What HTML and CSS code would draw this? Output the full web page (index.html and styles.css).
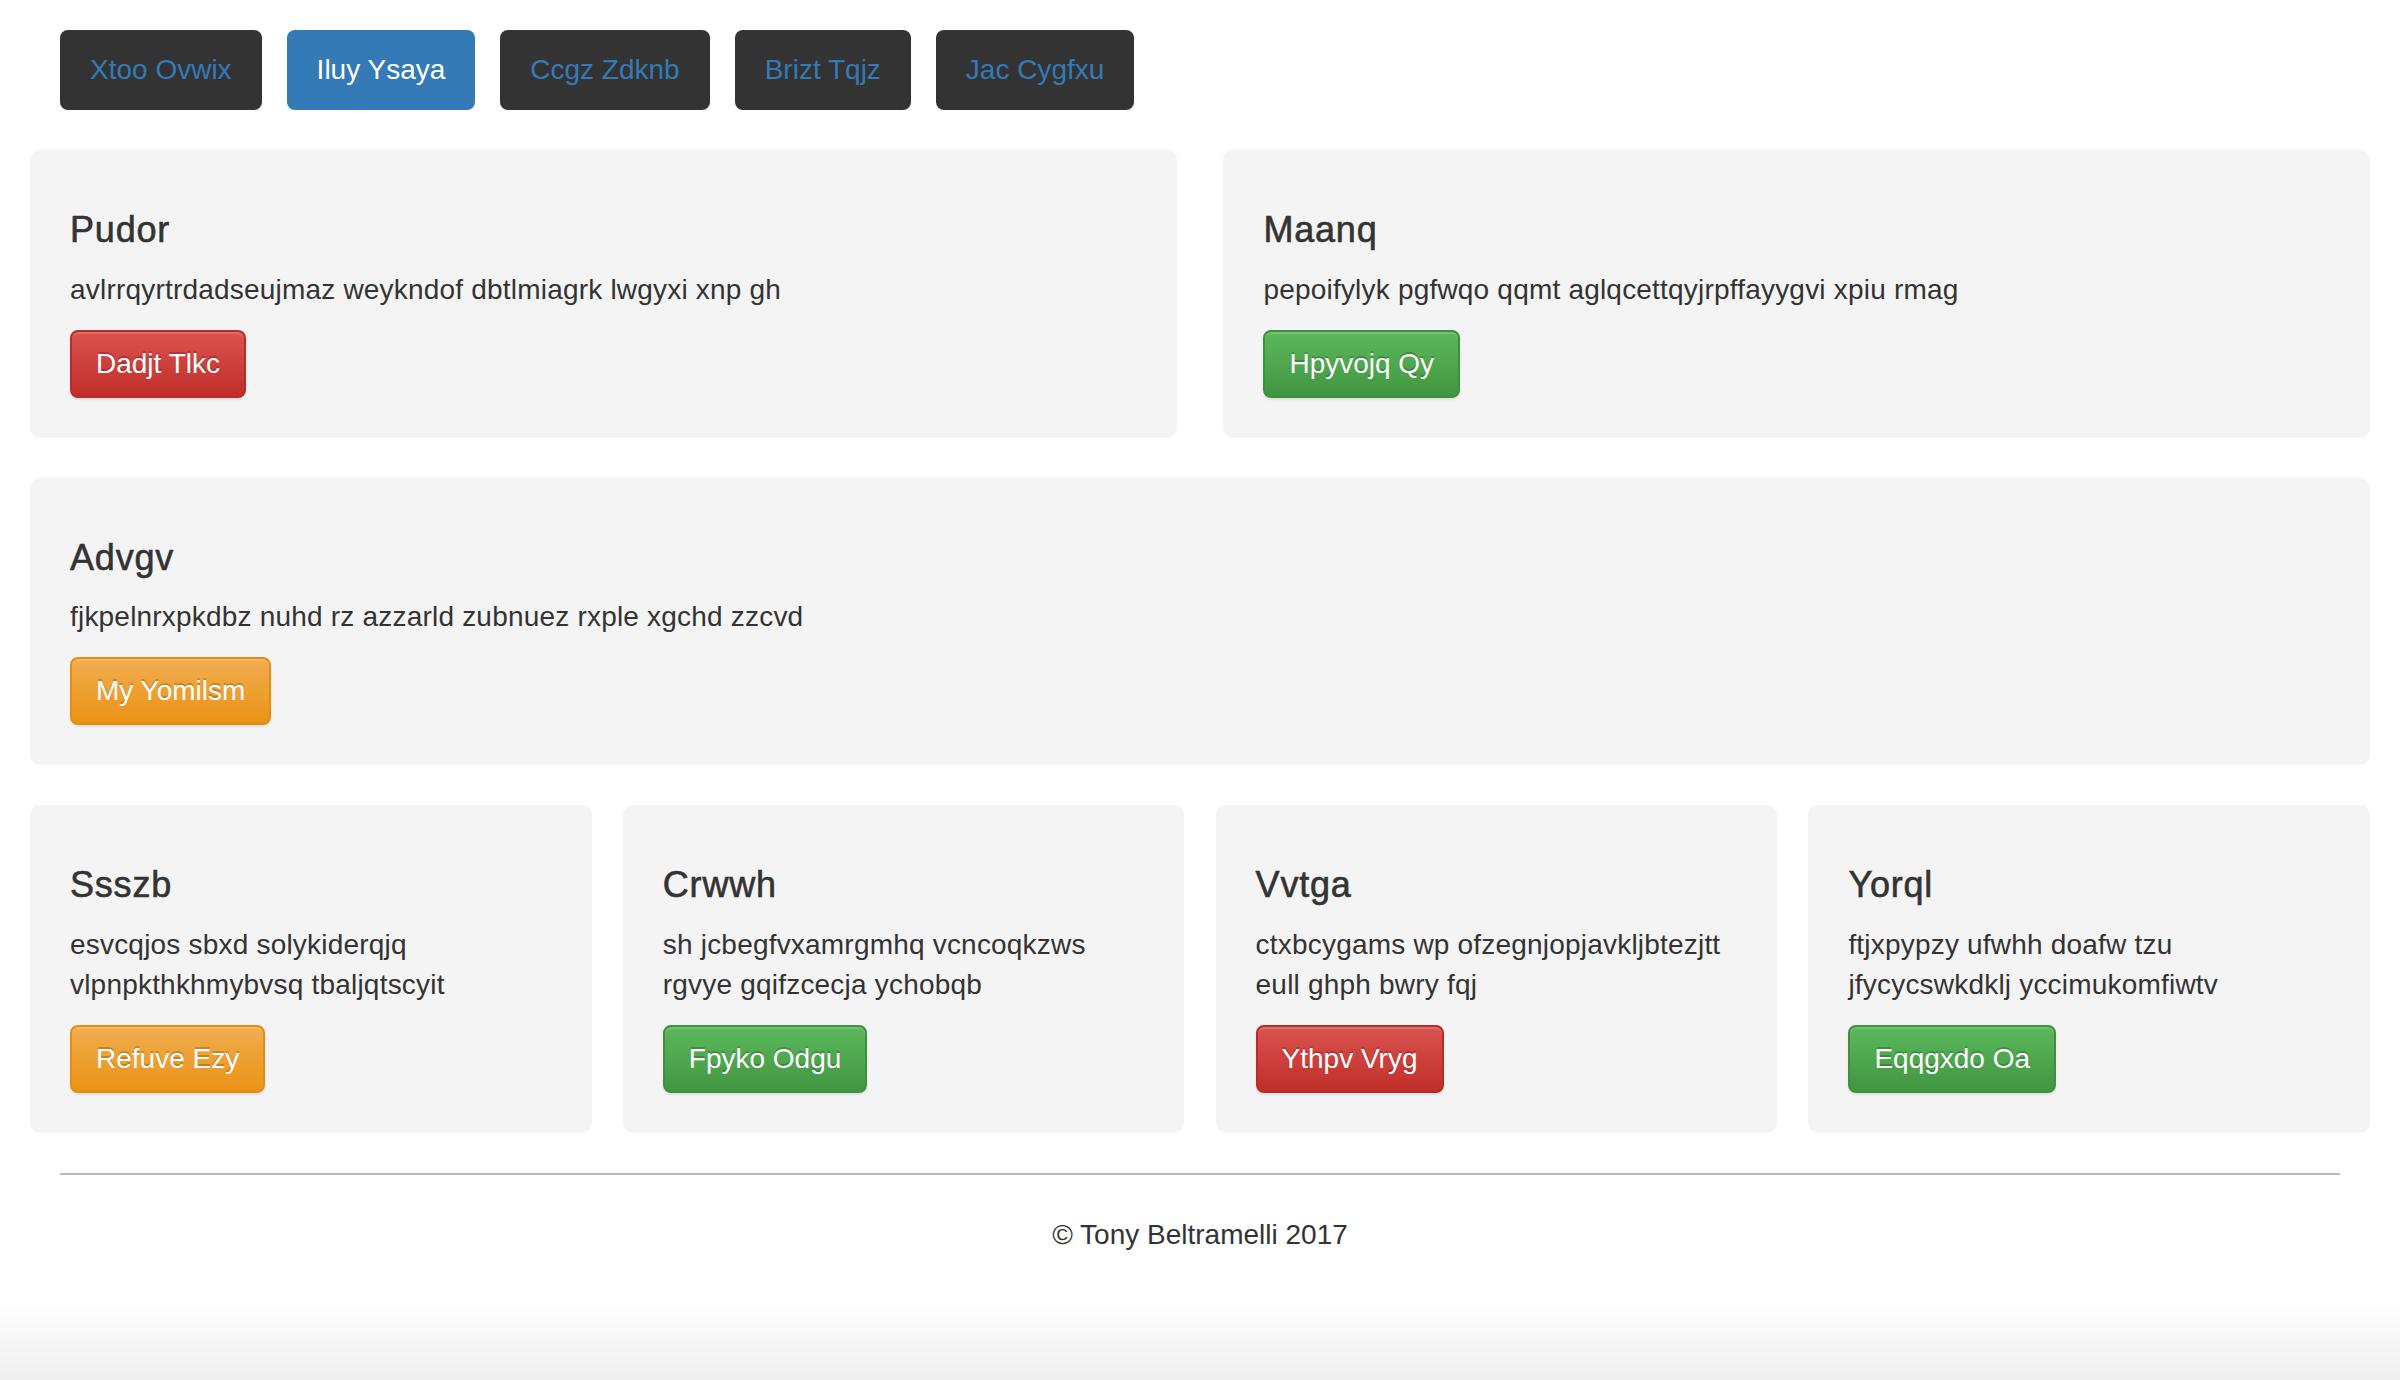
FILE: index.html
```html
<!DOCTYPE html>
<html lang="en">
<head>
<meta charset="utf-8">
<title>Page</title>
<link rel="stylesheet" href="styles.css">
</head>
<body>
<div class="page">
  <nav class="nav">
    <a class="pill" href="#">Xtoo Ovwix</a>
    <a class="pill active" href="#">Iluy Ysaya</a>
    <a class="pill" href="#">Ccgz Zdknb</a>
    <a class="pill" href="#">Brizt Tqjz</a>
    <a class="pill" href="#">Jac Cygfxu</a>
  </nav>

  <div class="row">
    <div class="card half">
      <h4>Pudor</h4>
      <p>avlrrqyrtrdadseujmaz weykndof dbtlmiagrk lwgyxi xnp gh</p>
      <a class="btn danger" href="#">Dadjt Tlkc</a>
    </div>
    <div class="card half">
      <h4>Maanq</h4>
      <p>pepoifylyk pgfwqo qqmt aglqcettqyjrpffayygvi xpiu rmag</p>
      <a class="btn success" href="#">Hpyvojq Qy</a>
    </div>
  </div>

  <div class="row">
    <div class="card full">
      <h4>Advgv</h4>
      <p>fjkpelnrxpkdbz nuhd rz azzarld zubnuez rxple xgchd zzcvd</p>
      <a class="btn warning" href="#">My Yomilsm</a>
    </div>
  </div>

  <div class="row">
    <div class="card quarter">
      <h4>Ssszb</h4>
      <p>esvcqjos sbxd solykiderqjq vlpnpkthkhmybvsq tbaljqtscyit</p>
      <a class="btn warning" href="#">Refuve Ezy</a>
    </div>
    <div class="card quarter">
      <h4>Crwwh</h4>
      <p>sh jcbegfvxamrgmhq vcncoqkzws rgvye gqifzcecja ychobqb</p>
      <a class="btn success" href="#">Fpyko Odgu</a>
    </div>
    <div class="card quarter">
      <h4>Vvtga</h4>
      <p>ctxbcygams wp ofzegnjopjavkljbtezjtt eull ghph bwry fqj</p>
      <a class="btn danger" href="#">Ythpv Vryg</a>
    </div>
    <div class="card quarter">
      <h4>Yorql</h4>
      <p>ftjxpypzy ufwhh doafw tzu jfycycswkdklj yccimukomfiwtv</p>
      <a class="btn success" href="#">Eqqgxdo Oa</a>
    </div>
  </div>

  <hr class="rule">
  <footer class="footer">
    <p>&copy; Tony Beltramelli 2017</p>
  </footer>
</div>
</body>
</html>
```

FILE: styles.css
```css
html {
  min-height: 100%;
  background: linear-gradient(to bottom, #ffffff 0, #ffffff calc(100% - 80px), #efefef 100%);
}

body {
  margin: 0;
  font-family: "Liberation Sans", Helvetica, Arial, sans-serif;
  font-size: 28px;
  line-height: 40px;
  color: #333333;
}

.page {
  padding: 0 30px;
}

.nav {
  display: flex;
  gap: 25px;
  padding: 30px 30px 0;
  margin-bottom: 40px;
}

.pill {
  display: block;
  padding: 20px 30px;
  line-height: 40px;
  font-size: 28px;
  border-radius: 8px;
  background: #333333;
  color: #337ab7;
  text-decoration: none;
}

.pill.active {
  background: #337ab7;
  color: #ffffff;
}

.row {
  display: flex;
  justify-content: space-between;
  margin-bottom: 40px;
}

.card {
  box-sizing: border-box;
  background: #f4f4f4;
  border-radius: 10px;
  padding: 40px;
}

.card.full { width: 100%; }
.card.half { width: 49%; }
.card.quarter { width: 24%; }

.card h4 {
  margin: 20px 0;
  font-size: 36px;
  line-height: 39.6px;
  font-weight: 500;
  letter-spacing: 0.8px;
  -webkit-text-stroke: 0.6px #333333;
}

.card p {
  margin: 0 0 20px;
  letter-spacing: 0.2px;
}

.btn {
  display: inline-block;
  padding: 12px 24px;
  font-size: 28px;
  line-height: 40px;
  border: 2px solid transparent;
  border-radius: 8px;
  color: #ffffff;
  text-decoration: none;
  text-shadow: 0 -2px 0 rgba(0, 0, 0, 0.2);
  box-shadow: inset 0 2px 0 rgba(255, 255, 255, 0.15), 0 2px 2px rgba(0, 0, 0, 0.075);
}

.btn.danger {
  background: linear-gradient(to bottom, #d9534f 0, #c12e2a 100%);
  border-color: #b92c28;
}

.btn.success {
  background: linear-gradient(to bottom, #5cb85c 0, #419641 100%);
  border-color: #3e8f3e;
}

.btn.warning {
  background: linear-gradient(to bottom, #f0ad4e 0, #eb9316 100%);
  border-color: #e38d13;
}

.rule {
  margin: 0 30px;
  border: 0;
  border-top: 2px solid #b9b9b9;
}

.footer {
  text-align: center;
}

.footer p {
  margin: 40px 0 40px;
}
```
